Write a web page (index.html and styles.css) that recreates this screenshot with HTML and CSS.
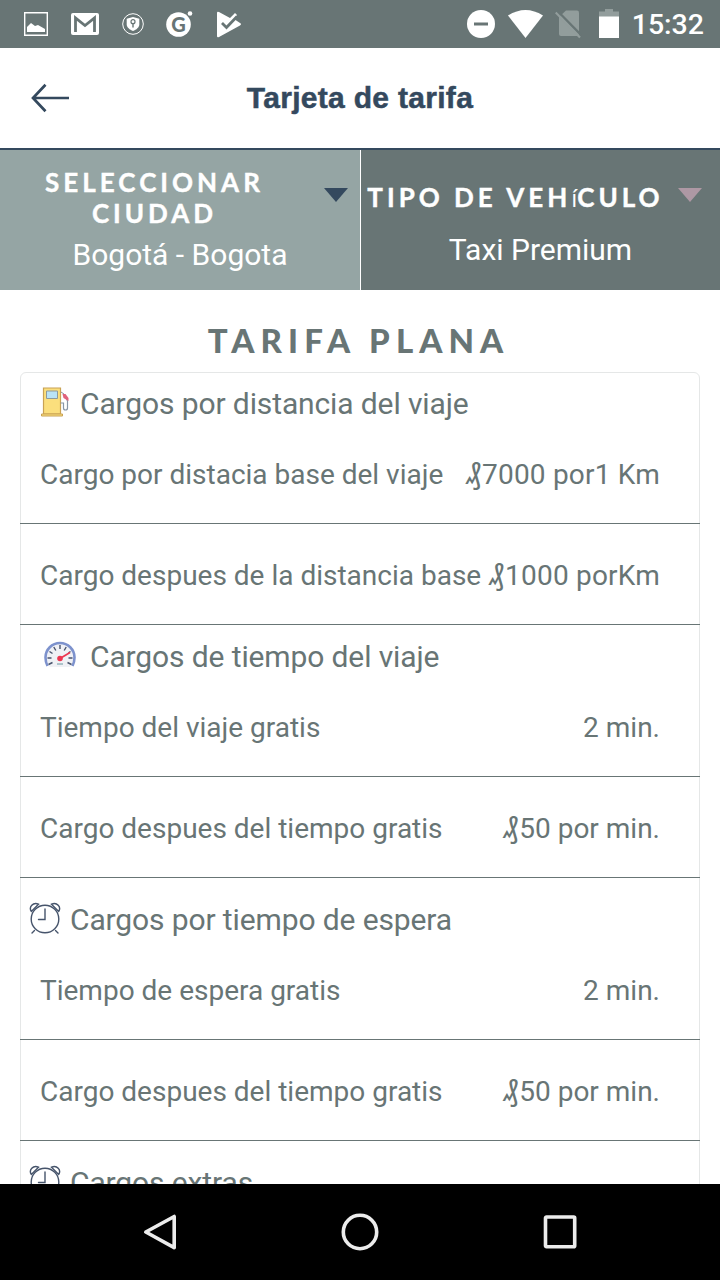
FILE: index.html
```html
<!DOCTYPE html>
<html lang="es">

<head>
    <meta charset="UTF-8">
    <meta name="viewport" content="width=device-width, initial-scale=1.0">
    <title>Tarjeta de tarifa</title>
    <link rel="stylesheet" href="styles.css">
</head>

<body>
    <!-- Shared icons -->
    <svg class="sprite" width="0" height="0">
        <symbol id="clock" viewBox="0 0 32 34">
            <g fill="none" stroke="#46546b" stroke-width="1.4" stroke-linecap="round">
                <circle cx="16" cy="18" r="13.8" />
                <path d="M16 8v10.500h-6.500M5.500 29.500l-2.500 2.500M26.500 29.500l2.500 2.500" />
                <path d="M2.300 10.500C-.5 6 4 .8 9.500 3.200zM29.700 10.500C32.500 6 28 .8 22.500 3.200z" />
            </g>
        </symbol>
    </svg>

    <!-- Status bar -->
    <div class="statusbar">
        <div class="notifications">
            <svg width="24" height="24" viewBox="0 0 24 24"><path d="M.7.700h22.600v22.600H.7z" fill="none" stroke="#fff" stroke-width="1.400" /><path d="M3 20v-5l4-4 4 3 3-1 7 4v3z" fill="#fff" /></svg>
            <svg width="28" height="24" viewBox="0 0 28 24"><rect y="1" width="28" height="22" rx="2" fill="#fff" /><path d="M4.500 20V6L14 13.500 23.500 6v14" fill="none" stroke="#687575" stroke-width="2.800" /></svg>
            <svg width="22" height="24" viewBox="0 0 22 24"><circle cx="11" cy="12" r="10.300" fill="none" stroke="#fff" stroke-width="1" /><path d="M11 5l6.300 1.800v5.500c0 3.200-3 5.500-6.300 6.700-3.300-1.200-6.300-3.500-6.300-6.700V6.800z" fill="#fff" /><circle cx="11" cy="9.700" r="2" fill="none" stroke="#687575" stroke-width="1.200" /><path d="M11 11.500v4" stroke="#687575" stroke-width="1.400" /></svg>
            <svg width="27" height="28" viewBox="0 0 27 28"><circle cx="12.500" cy="14.500" r="12.300" fill="#fff" /><circle cx="24" cy="3.500" r="2.300" fill="#fff" /><text x="12.500" y="21.500" class="badge-letter">G</text></svg>
            <svg width="26" height="28" viewBox="0 0 26 28"><path d="M1 3q0-2 2-1l11 6 5-5 2 2-3 4 6 4q2 1 0 2.500L3 27q-2 .8-2-1z" fill="#fff" /><path d="M6 13l4.500 4.500L21 6.500" fill="none" stroke="#687575" stroke-width="2.800" /></svg>
        </div>
        <div class="system">
            <svg width="28" height="30" viewBox="0 0 28 30"><circle cx="14" cy="15" r="14" fill="#fff" /><path d="M7 15h14" stroke="#687575" stroke-width="3" /></svg>
            <svg class="wifi" width="35" height="30" viewBox="0 0 35 30"><path d="M0 6.500Q17.500-4.500 35 6.500L17.500 29z" fill="#fff" /></svg>
            <svg class="nosim" width="27" height="30" viewBox="0 0 27 30"><path d="M4 8l7-6.500h11q2 0 2 2V25q0 2-2 2H6q-2 0-2-2z" fill="#929d9c" /><path d="M2.500 2L27 27" stroke="#687575" stroke-width="2.500" /><path d="M.7 3.500L25 28.500" stroke="#929d9c" stroke-width="2.200" /></svg>
            <svg class="battery" width="20" height="30" viewBox="0 0 20 30"><path d="M0 2.500h6V0h8v2.500h6V8H0z" fill="#929d9c" /><path d="M0 7.500h20V29H0z" fill="#fff" /></svg>
            <span class="time">15:32</span>
        </div>
    </div>

    <!-- Header -->
    <div class="header">
        <svg class="back" width="40" height="32" viewBox="0 0 40 32"><path d="M15.500 2.800L3 16 15.500 29.200M2.500 16H39" fill="none" stroke="#34495e" stroke-width="2.700" /></svg>
        <h1>Tarjeta de tarifa</h1>
    </div>

    <!-- City and vehicle selectors -->
    <div class="selectors">
        <div class="selector city">
            <div class="label">SELECCIONAR<br>CIUDAD</div>
            <svg class="arrow" width="24" height="14" viewBox="0 0 24 14"><path d="M0 0h24L12 14z" fill="#34495e" /></svg>
            <div class="value">Bogotá - Bogota</div>
        </div>
        <div class="selector vehicle">
            <div class="label">TIPO DE VEH<span class="accent">í</span>CULO</div>
            <svg class="arrow" width="24" height="14" viewBox="0 0 24 14"><path d="M0 0h24L12 14z" fill="#ae98a4" /></svg>
            <div class="value">Taxi Premium</div>
        </div>
    </div>

    <!-- Fare card -->
    <div class="content">
        <h2>TARIFA PLANA</h2>
        <div class="card">
            <div class="section fuel">
                <svg width="30" height="32" viewBox="0 0 30 32">
                    <path d="M3.500 2h17v26h-17z" fill="#fbdf7d" stroke="#c9a254" stroke-width="1.200" />
                    <path d="M1.500 28h21v2h-21z" fill="#fbdf7d" stroke="#c9a254" />
                    <path d="M6.500 5h11v7.500h-11z" fill="#b9e3f7" stroke="#8d9a9c" />
                    <path d="M20.500 17h3v5q0 2 2 2t2-2v-7l-1-2" fill="none" stroke="#8795a5" stroke-width="1.200" />
                    <path d="M21 6l3 2" stroke="#8795a5" />
                    <path d="M22.500 8l3 0 3 4v3l-5-3z" fill="#e0627c" />
                </svg>
                <h3>Cargos por distancia del viaje</h3>
            </div>
            <div class="row"><span>Cargo por distacia base del viaje</span><span class="amount"><span class="currency">₰</span>7000 por1 Km</span></div>
            <div class="row"><span>Cargo despues de la distancia base</span><span class="amount"><span class="currency">₰</span>1000 porKm</span></div>

            <div class="section speed">
                <svg width="32" height="30" viewBox="0 0 32 30">
                    <path d="M6 26Q1.500 22 1.500 16.500A14.500 14.500 0 0 1 30.500 16.500Q30.500 22 26 26z" fill="#f0f1f5" />
                    <path d="M3.500 25Q1.500 21 1.500 16.500A14.500 14.500 0 0 1 30.500 16.500Q30.500 21 28.500 25" fill="none" stroke="#7d92cd" stroke-width="2.600" />
                    <path d="M16 4v4M9.800 6l2 3.500M5.500 10.500l3 2M3.500 17h4M4.500 23.500l4-2M22.200 6l-2 3.500M26.500 10.500l-2 1.300M28.500 17h-4M27.500 23.500l-4-2" stroke="#48536c" stroke-width="1.400" />
                    <path d="M16 17.500l10-6" stroke="#ed3650" stroke-width="1.700" />
                    <circle cx="16" cy="17.500" r="2.800" fill="#ed3650" />
                    <path d="M13 23h6" stroke="#81a5ae" stroke-width="1.200" />
                </svg>
                <h3>Cargos de tiempo del viaje</h3>
            </div>
            <div class="row"><span>Tiempo del viaje gratis</span><span>2 min.</span></div>
            <div class="row"><span>Cargo despues del tiempo gratis</span><span><span class="currency">₰</span>50 por min.</span></div>

            <div class="section wait">
                <svg width="32" height="34"><use href="#clock" /></svg>
                <h3>Cargos por tiempo de espera</h3>
            </div>
            <div class="row"><span>Tiempo de espera gratis</span><span>2 min.</span></div>
            <div class="row"><span>Cargo despues del tiempo gratis</span><span><span class="currency">₰</span>50 por min.</span></div>

            <div class="section wait">
                <svg width="32" height="34"><use href="#clock" /></svg>
                <h3>Cargos extras</h3>
            </div>
        </div>
    </div>

    <!-- Android navigation -->
    <div class="navbar">
        <svg width="40" height="40" viewBox="0 0 40 40"><path d="M34.200 4.500v31.200L5.800 20z" /></svg>
        <svg width="40" height="40" viewBox="0 0 40 40"><circle cx="20" cy="20" r="16.700" /></svg>
        <svg width="40" height="40" viewBox="0 0 40 40"><rect x="5.500" y="5" width="29.200" height="29.800" rx="1" /></svg>
    </div>
</body>

</html>
```

FILE: styles.css
```css
/* General styling */
* {
    box-sizing: border-box;
}

body {
    margin: 0;
    height: 1280px;
    display: flex;
    flex-direction: column;
    overflow: hidden;
    background-color: #fff;
    color: #687575;
    font-family: Roboto, sans-serif;
}

h1,
h2,
h3 {
    margin: 0;
}

svg {
    display: block;
    flex: none;
}

.sprite {
    position: absolute;
}

/* Status bar */
.statusbar {
    flex: none;
    height: 48px;
    padding: 0 16px 0 24px;
    background-color: #687575;
    display: flex;
    justify-content: space-between;
    align-items: center;
}

.notifications,
.system {
    display: flex;
    align-items: center;
}

.notifications {
    gap: 22.800px;
}

.badge-letter {
    font: 900 20px Lato, sans-serif;
    fill: #687575;
    text-anchor: middle;
}

.wifi {
    margin-left: 13px;
}

.nosim {
    margin-left: 12px;
}

.battery {
    margin-left: 17px;
}

.time {
    margin-left: 13px;
    color: #fff;
    font-size: 28.500px;
    font-weight: 500;
    line-height: 48px;
    padding-top: 2px;
}

/* Header */
.header {
    flex: none;
    height: 102px;
    padding: 0 30px;
    border-bottom: 2px solid #34495e;
    display: grid;
    grid-template-columns: 40px 1fr 40px;
    align-items: center;
}

.header h1 {
    color: #34495e;
    font: bold 30px "Liberation Sans", Arial, sans-serif;
    letter-spacing: .3px;
    -webkit-text-stroke: .5px #34495e;
    text-align: center;
}

/* Selectors */
.selectors {
    flex: none;
    height: 140px;
    display: flex;
}

.selector {
    width: 360px;
    display: grid;
    color: #fff;
    text-align: center;
    align-content: start;
}

.city {
    width: 361px;
    grid-template-columns: 311px 49px;
    padding-top: 17px;
    background-color: #95a5a4;
    border-right: 1px solid #fff;
}

.vehicle {
    width: 359px;
    grid-template-columns: 309px 50px;
    padding-top: 32px;
    background-color: #687575;
}

.label {
    font: bold 26px/31px Lato, sans-serif;
    letter-spacing: 4px;
    -webkit-text-stroke: .4px #fff;
    white-space: nowrap;
}

.city .label {
    padding-right: 2px;
}

.accent {
    font: 24px/20px "Open Sans", sans-serif;
    letter-spacing: 0;
    -webkit-text-stroke: 0;
}

.arrow {
    margin: 21px 0 0 13px;
}

.vehicle .arrow {
    margin: 6px 0 0 8px;
}

.value {
    grid-column: 1 / 3;
    font-size: 30px;
    line-height: 40px;
}

.city .value {
    padding-top: 6px;
}

.vehicle .value {
    padding-top: 17px;
}

/* Fare card */
.content {
    flex: 1;
    min-height: 0;
    overflow: hidden;
    padding: 0 20px;
}

.content h2 {
    height: 82px;
    padding: 30px 3px 0 0;
    font: 900 33px/40px Lato, sans-serif;
    letter-spacing: 6.100px;
    text-align: center;
}

.card {
    border: 1px solid #e5e7e7;
    border-radius: 6px;
    height: 900px;
}

.section {
    display: flex;
    align-items: center;
}

.section svg {
    margin-top: -3px;
}

.section h3 {
    font-size: 30px;
    font-weight: 400;
    letter-spacing: -.12px;
    line-height: 40px;
}

.fuel {
    height: 50px;
    padding: 11px 0 0 19px;
    gap: 10px;
}

.speed {
    height: 51px;
    padding: 13px 0 0 23px;
    gap: 14px;
}

.wait {
    height: 61px;
    padding: 22px 0 0 8px;
    gap: 9px;
}

.row {
    height: 101px;
    margin: 0 -1px;
    padding: 2px 40px 0 20px;
    border-bottom: 1px solid #687575;
    display: flex;
    justify-content: space-between;
    align-items: center;
    font-size: 28px;
    white-space: nowrap;
}

.amount {
    letter-spacing: .2px;
}

.currency {
    font-size: 30px;
    line-height: 28px;
    margin-right: 1px;
}

/* Android navigation */
.navbar {
    flex: none;
    height: 96px;
    padding: 0 140px;
    background-color: #000;
    display: flex;
    justify-content: space-between;
    align-items: center;
}

.navbar svg {
    fill: none;
    stroke: #ececec;
    stroke-width: 3.6;
    stroke-linejoin: round;
}
```
